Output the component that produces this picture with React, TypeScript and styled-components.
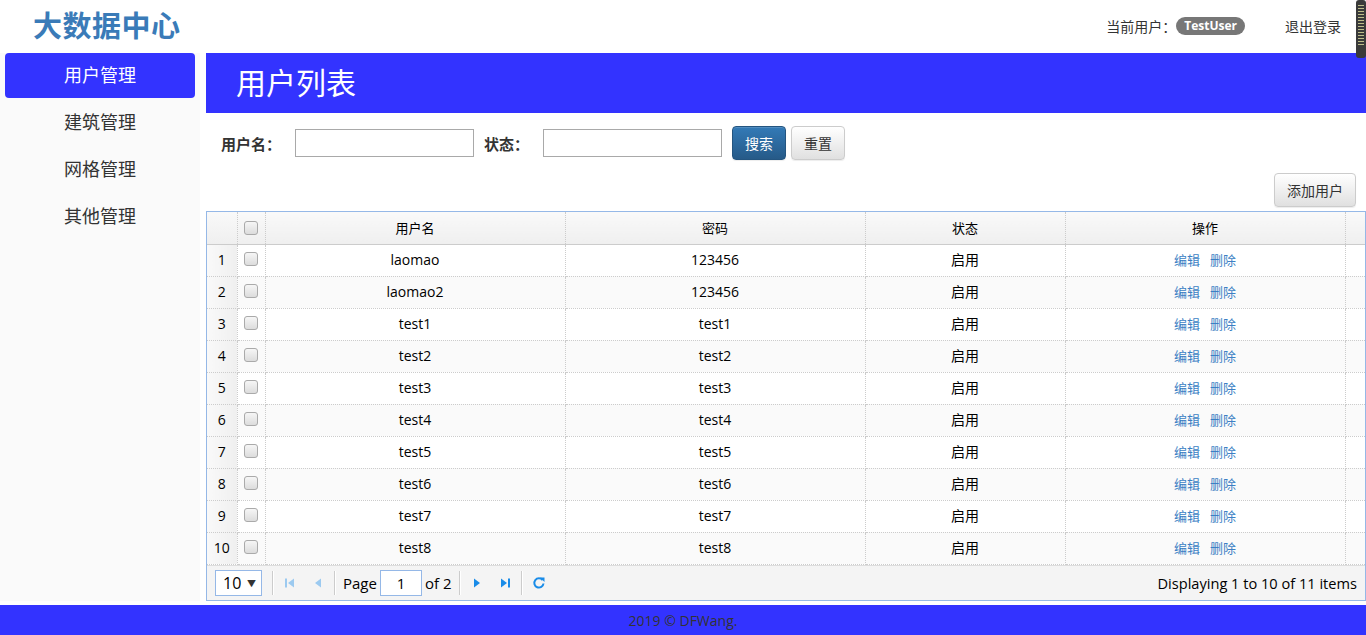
import React from "react";
import styled, { createGlobalStyle } from "styled-components";

const Global = createGlobalStyle`
  html, body { margin: 0; padding: 0; background: #fff; }
  body { font-family: "Open Sans", "Noto Sans CJK SC", sans-serif; color: #333; font-size: 14px; }
  * { box-sizing: border-box; }
`;

const Page = styled.div`
  width: 1366px;
  height: 635px;
  position: relative;
  display: flex;
  flex-direction: column;
  overflow: hidden;
`;

const Header = styled.header`
  height: 53px;
  display: flex;
  align-items: center;
  padding: 0 25px 0 33px;
`;

const Logo = styled.div`
  font-family: "Noto Sans CJK SC", sans-serif;
  font-weight: 700;
  font-size: 29px;
  color: #3a7bb8;
  letter-spacing: 0.5px;
  margin-top: -5px;
`;

const UserArea = styled.div`
  margin-left: auto;
  display: flex;
  align-items: center;
  font-family: "Noto Sans CJK SC", sans-serif;
  font-size: 14px;
  color: #333;
  margin-top: -1px;
`;

const Badge = styled.span`
  display: inline-block;
  background: #777;
  color: #fff;
  font-family: "Open Sans", sans-serif;
  font-weight: 700;
  font-size: 12px;
  line-height: 18px;
  padding: 0 8px;
  border-radius: 9px;
  margin-right: 40px;
`;

const Grip = styled.div`
  position: absolute;
  right: 0;
  top: 0;
  width: 10px;
  height: 58px;
  border-radius: 3px;
  background: #3a3a3a;
  padding: 5px 2px;
  display: flex;
  flex-direction: column;
  gap: 2px;
`;

const GripLine = styled.div`
  height: 1px;
  background: #bdbd8a;
`;

const Body = styled.div`
  flex: 1;
  display: flex;
  gap: 6px;
`;

const Sidebar = styled.nav`
  width: 200px;
  background: #fafafa;
  padding: 0 5px;
  display: flex;
  flex-direction: column;
  gap: 2px;
`;

const NavItem = styled.div<{ $active?: boolean }>`
  height: 45px;
  display: flex;
  align-items: center;
  justify-content: center;
  padding-bottom: 3px;
  font-family: "Noto Sans CJK SC", sans-serif;
  font-size: 18px;
  border-radius: 4px;
  color: ${(p) => (p.$active ? "#fff" : "#333")};
  background: ${(p) => (p.$active ? "#3333ff" : "transparent")};
`;

const Main = styled.main`
  flex: 1;
  display: flex;
  flex-direction: column;
  min-width: 0;
`;

const Banner = styled.div`
  height: 60px;
  background: #3333ff;
  color: #fff;
  font-family: "Noto Sans CJK SC", sans-serif;
  font-size: 30px;
  display: flex;
  align-items: center;
  padding-left: 30px;
  padding-bottom: 5px;
`;

const SearchRow = styled.div`
  display: flex;
  align-items: center;
  height: 34px;
  margin-top: 13px;
  padding-left: 15px;
`;

const Label = styled.label`
  font-family: "Noto Sans CJK SC", sans-serif;
  font-weight: 700;
  font-size: 15px;
  color: #333;
  margin-right: 14px;
`;

const TextInput = styled.input`
  width: 179px;
  height: 28px;
  border: 1px solid #a9a9a9;
  margin-right: 10px;
  outline: none;
`;

const Btn = styled.button<{ $primary?: boolean }>`
  height: 34px;
  padding: 0 12px;
  border-radius: 4px;
  font-family: "Noto Sans CJK SC", sans-serif;
  font-size: 14px;
  cursor: pointer;
  color: ${(p) => (p.$primary ? "#fff" : "#333")};
  border: 1px solid ${(p) => (p.$primary ? "#245580" : "#ccc")};
  background: ${(p) =>
    p.$primary
      ? "linear-gradient(to bottom, #337ab7 0%, #265a88 100%)"
      : "linear-gradient(to bottom, #fff 0%, #e0e0e0 100%)"};
  box-shadow: inset 0 1px 0 rgba(255,255,255,.15), 0 1px 1px rgba(0,0,0,.075);
  margin-left: ${(p) => (p.$primary ? "0" : "5px")};
`;

const ToolRow = styled.div`
  display: flex;
  justify-content: flex-end;
  padding-right: 10px;
  margin-top: 13px;
  height: 34px;
`;

const GridBox = styled.div`
  margin-top: 4px;
  border: 1px solid #95b8e7;
  height: 390px;
  display: flex;
  flex-direction: column;
`;

const Table = styled.table`
  border-collapse: collapse;
  table-layout: fixed;
  width: 100%;
`;

const Th = styled.th<{ $w?: number }>`
  width: ${(p) => (p.$w ? `${p.$w}px` : "auto")};
  height: 32px;
  padding: 0;
  font-weight: 400;
  font-family: "Noto Sans CJK SC", sans-serif;
  font-size: 13px;
  color: #000;
  background: linear-gradient(to bottom, #f9f9f9 0%, #efefef 100%);
  border-right: 1px dotted #ccc;
  border-bottom: 1px solid #ccc;
  &:last-child { border-right: none; }
`;

const Tr = styled.tr<{ $odd?: boolean }>`
  background: ${(p) => (p.$odd ? "#fafafa" : "#fff")};
`;

const Td = styled.td<{ $num?: boolean; $cjk?: boolean }>`
  height: 32px;
  padding: 0 0 2px;
  text-align: center;
  font-size: 14px;
  color: #000;
  font-family: ${(p) => (p.$cjk ? `"Noto Sans CJK SC", sans-serif` : `"Open Sans", "Noto Sans CJK SC", sans-serif`)};
  background: ${(p) => (p.$num ? "linear-gradient(to right, #f9f9f9, #efefef)" : "transparent")};
  border-right: 1px dotted #ccc;
  border-bottom: 1px dotted #ccc;
  &:last-child { border-right: none; }
`;

const Check = styled.span`
  display: inline-block;
  width: 14px;
  height: 14px;
  border: 1px solid #aaa;
  border-radius: 3px;
  background: linear-gradient(to bottom, #f6f6f6, #dcdcdc);
  vertical-align: middle;
  margin-top: -3px;
`;

const ActionLink = styled.a`
  color: #3c7fc4;
  font-family: "Noto Sans CJK SC", sans-serif;
  font-size: 13px;
  text-decoration: none;
  margin: 0 5px;
`;

const Pager = styled.div`
  margin-top: auto;
  height: 35px;
  background: #f4f4f4;
  border-top: 1px solid #ddd;
  display: flex;
  align-items: center;
  padding: 0 8px;
  font-size: 14px;
  color: #000;
`;

const PageSelect = styled.div`
  width: 47px;
  height: 26px;
  border: 1px solid #95b8e7;
  background: #fff;
  display: flex;
  align-items: center;
  justify-content: space-between;
  padding: 0 5px 0 7px;
  font-size: 16px;
  margin-right: 8px;
`;

const Caret = styled.span`
  font-size: 9px;
  color: #333;
`;

const Sep = styled.div`
  width: 2px;
  height: 24px;
  border-left: 1px solid #ccc;
  border-right: 1px solid #fff;
  margin: 0 2px;
`;

const IconBtn = styled.span`
  width: 28px;
  height: 24px;
  display: inline-flex;
  align-items: center;
  justify-content: center;
`;

const PageInput = styled.div`
  width: 42px;
  height: 26px;
  border: 1px solid #95b8e7;
  background: #fff;
  display: flex;
  align-items: center;
  justify-content: center;
  margin: 0 3px;
  font-size: 15px;
`;

const PagerText = styled.span<{ $pl?: number; $pr?: number }>`
  font-size: 15px;
  padding-left: ${(p) => p.$pl ?? 0}px;
  padding-right: ${(p) => p.$pr ?? 0}px;
`;

const PagerInfo = styled.span`
  margin-left: auto;
  font-size: 14.6px;
`;

const Footer = styled.footer`
  height: 30px;
  margin-top: 4px;
  background: #3333ff;
  color: #333;
  display: flex;
  align-items: center;
  justify-content: center;
  font-size: 14px;
`;

const Spacer = styled.div`
  flex: 1;
`;

const Tri = ({ dir, color, bar }: { dir: "l" | "r"; color: string; bar?: boolean }) => (
  <svg width="12" height="12" viewBox="0 0 12 12">
    {dir === "l" ? (
      <>
        {bar && <rect x="1" y="1.5" width="2" height="9" fill={color} />}
        <path d={bar ? "M10 1.5 L4 6 L10 10.5 Z" : "M9 1.5 L3 6 L9 10.5 Z"} fill={color} />
      </>
    ) : (
      <>
        <path d={bar ? "M2 1.5 L8 6 L2 10.5 Z" : "M3 1.5 L9 6 L3 10.5 Z"} fill={color} />
        {bar && <rect x="9" y="1.5" width="2" height="9" fill={color} />}
      </>
    )}
  </svg>
);

const Refresh = () => (
  <svg width="14" height="14" viewBox="0 0 14 14">
    <path d="M10.6 4.2 A4.6 4.6 0 1 0 11.5 7.5" fill="none" stroke="#1a8ce8" strokeWidth="2" />
    <path d="M8 1.5 L12.5 1.5 L12.5 6 Z" fill="#1a8ce8" />
  </svg>
);

const rows = [
  ["laomao", "123456"],
  ["laomao2", "123456"],
  ["test1", "test1"],
  ["test2", "test2"],
  ["test3", "test3"],
  ["test4", "test4"],
  ["test5", "test5"],
  ["test6", "test6"],
  ["test7", "test7"],
  ["test8", "test8"],
];

export default function App() {
  return (
    <Page>
      <Global />
      <Header>
        <Logo>大数据中心</Logo>
        <UserArea>
          当前用户：<Badge>TestUser</Badge>退出登录
        </UserArea>
      </Header>
      <Grip>
        {Array.from({ length: 14 }).map((_, i) => (
          <GripLine key={i} />
        ))}
      </Grip>
      <Body>
        <Sidebar>
          <NavItem $active>用户管理</NavItem>
          <NavItem>建筑管理</NavItem>
          <NavItem>网格管理</NavItem>
          <NavItem>其他管理</NavItem>
        </Sidebar>
        <Main>
          <Banner>用户列表</Banner>
          <SearchRow>
            <Label>用户名：</Label>
            <TextInput />
            <Label>状态：</Label>
            <TextInput />
            <Btn $primary>搜索</Btn>
            <Btn>重置</Btn>
          </SearchRow>
          <ToolRow>
            <Btn>添加用户</Btn>
          </ToolRow>
          <GridBox>
            <Table>
              <thead>
                <tr>
                  <Th $w={30} />
                  <Th $w={28}>
                    <Check />
                  </Th>
                  <Th $w={300}>用户名</Th>
                  <Th $w={300}>密码</Th>
                  <Th $w={200}>状态</Th>
                  <Th $w={280}>操作</Th>
                  <Th />
                </tr>
              </thead>
              <tbody>
                {rows.map((r, i) => (
                  <Tr key={i} $odd={i % 2 === 1}>
                    <Td $num>{i + 1}</Td>
                    <Td>
                      <Check />
                    </Td>
                    <Td>{r[0]}</Td>
                    <Td>{r[1]}</Td>
                    <Td $cjk>启用</Td>
                    <Td>
                      <ActionLink>编辑</ActionLink>
                      <ActionLink>删除</ActionLink>
                    </Td>
                    <Td />
                  </Tr>
                ))}
              </tbody>
            </Table>
            <Pager>
              <PageSelect>
                10<Caret>▼</Caret>
              </PageSelect>
              <Sep />
              <IconBtn>
                <Tri dir="l" bar color="#9ccaf0" />
              </IconBtn>
              <IconBtn>
                <Tri dir="l" color="#9ccaf0" />
              </IconBtn>
              <Sep />
              <PagerText $pl={5}>Page</PagerText>
              <PageInput>1</PageInput>
              <PagerText $pr={6}>of 2</PagerText>
              <Sep />
              <IconBtn>
                <Tri dir="r" color="#1a8ce8" />
              </IconBtn>
              <IconBtn>
                <Tri dir="r" bar color="#1a8ce8" />
              </IconBtn>
              <Sep />
              <IconBtn>
                <Refresh />
              </IconBtn>
              <PagerInfo>Displaying 1 to 10 of 11 items</PagerInfo>
            </Pager>
          </GridBox>
          <Spacer />
        </Main>
      </Body>
      <Footer>2019 © DFWang.</Footer>
    </Page>
  );
}
